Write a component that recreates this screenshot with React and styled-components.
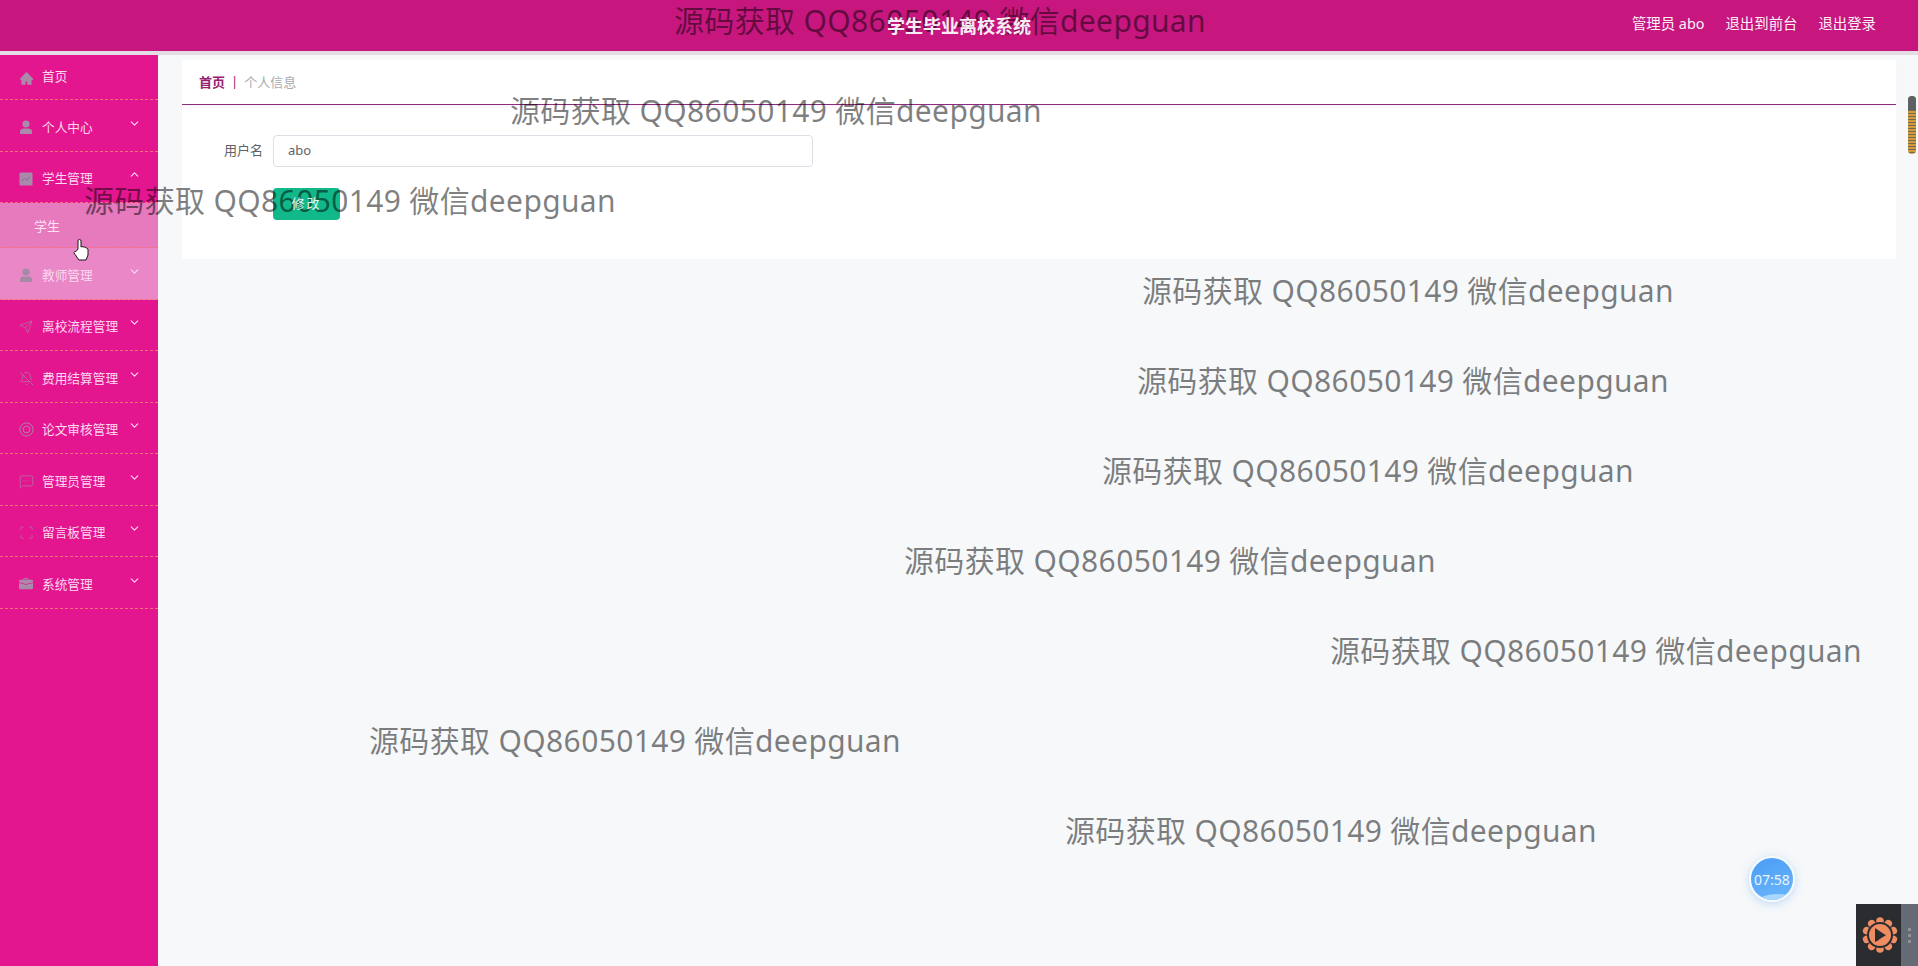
import React from 'react';
import styled, { createGlobalStyle } from 'styled-components';
import { Send, BellOff, MessageSquareMore, Scan, ChevronDown, ChevronUp } from 'lucide-react';
import { AiFillHome } from 'react-icons/ai';
import { BsBriefcaseFill } from 'react-icons/bs';

const FONT = '"Noto Sans", "Noto Sans CJK SC", sans-serif';

const GlobalStyle = createGlobalStyle`
    html, body {
        margin: 0;
        padding: 0;
        height: 100%;
        overflow: hidden;
        background: #f6f8fa;
        font-family: ${FONT};
    }
`;

const Page = styled.div`
    position: relative;
    width: 1918px;
    height: 966px;
    overflow: hidden;
    display: flex;
    flex-direction: column;
`;

const Header = styled.header`
    height: 51px;
    flex: none;
    display: grid;
    grid-template-columns: 1fr auto 1fr;
    align-items: center;
    background: #c7177f;
    border-bottom: 4px solid #e4dde3;
    color: #fff;
`;

const Title = styled.div`
    grid-column: 2;
    font-size: 18px;
    font-weight: 700;
    position: relative;
    z-index: 2;
    top: -1px;
    opacity: .92;
`;

const HeaderLinks = styled.nav`
    justify-self: end;
    display: flex;
    gap: 21px;
    padding-right: 42px;
    font-size: 14.4px;
    position: relative;
    top: -3px;
    opacity: .94;
`;

const Body = styled.div`
    flex: 1;
    display: flex;
    min-height: 0;
`;

const Sidebar = styled.aside`
    width: 158px;
    flex: none;
    background: #e4168f;
`;

const MenuRow = styled.div`
    height: ${p => p.$height || 51.5}px;
    box-sizing: border-box;
    display: flex;
    align-items: center;
    padding-left: 19px;
    border-bottom: 1px dashed #fb6f78;
    color: #fbd9f0;
    font-size: 12.7px;
    background: ${p => p.$hover ? '#e987c7' : 'transparent'};
`;

const IconSlot = styled.span`
    width: 23px;
    flex: none;
    display: flex;
    align-items: center;
    position: relative;
    top: ${p => p.$short ? 1 : 2}px;
    color: ${p => p.$hover ? '#a48aa6' : '#a98aab'};
`;

const MenuLabel = styled.span`
    flex: 1;
    white-space: nowrap;
    position: relative;
    top: ${p => p.$short ? -2 : 1}px;
`;

const Arrow = styled.span`
    width: 30px;
    flex: none;
    display: flex;
    color: #fbd9f0;
    position: relative;
    top: -2px;
`;

const SubRow = styled.div`
    height: 45px;
    box-sizing: border-box;
    display: flex;
    align-items: center;
    padding-left: 34px;
    border-bottom: 1px dashed #fb6f78;
    background: #e779bd;
    color: #fde4f4;
    font-size: 13px;
`;

const Main = styled.main`
    flex: 1;
    min-width: 0;
    padding: 5px 22px 0 24px;
`;

const Panel = styled.section`
    background: #fff;
    height: 199px;
`;

const Crumbs = styled.div`
    height: 45px;
    box-sizing: border-box;
    display: flex;
    align-items: center;
    gap: 6px;
    padding: 0 0 2px 17px;
    border-bottom: 1px solid #8b2c7e;
    box-shadow: 0 4px 6px -2px #fbf1fa;
    font-size: 13px;
`;

const CrumbHome = styled.span`
    color: #96206f;
    font-weight: 700;
`;

const CrumbSep = styled.span`
    color: #a8235f;
`;

const CrumbCurrent = styled.span`
    color: #a6adb4;
`;

const Form = styled.div`
    padding-top: 30px;
    display: grid;
    grid-template-columns: 81px 540px;
    column-gap: 10px;
    row-gap: 21px;
    align-items: center;
`;

const FieldLabel = styled.label`
    font-size: 13px;
    color: #606266;
    text-align: right;
    position: relative;
    top: -2px;
`;

const TextInput = styled.div`
    height: 32px;
    box-sizing: border-box;
    display: flex;
    align-items: center;
    padding: 0 0 2px 14px;
    border: 1px solid #dcdfe6;
    border-radius: 4px;
    font-size: 13px;
    color: #606266;
`;

const SaveButton = styled.button`
    grid-column: 2;
    width: 67px;
    height: 32px;
    padding: 0 0 4px;
    border: 0;
    border-radius: 4px;
    background: #10b88a;
    font: 13px ${FONT};
`;

const SaveLabel = styled.span`
    position: relative;
    z-index: 2;
    color: #fff;
    letter-spacing: 2px;
    opacity: .9;
`;

const Watermark = styled.div`
    position: absolute;
    left: ${p => p.$x}px;
    top: ${p => p.$y}px;
    transform: translateY(-50%);
    font-size: 30px;
    line-height: 44px;
    letter-spacing: .35px;
    color: rgba(0, 0, 0, .5);
    white-space: nowrap;
    pointer-events: none;
`;

const Scrollbar = styled.div`
    position: absolute;
    left: 1908px;
    top: 96px;
    width: 8px;
    height: 58px;
    border-radius: 4px;
    background: repeating-linear-gradient(#d19a3c 0 2px, #7a6a50 2px 3px);
    overflow: hidden;
`;

const ScrollCap = styled.div`
    height: 14px;
    background: #5d6166;
`;

const Timer = styled.div`
    position: absolute;
    left: 1749px;
    top: 856px;
    width: 42px;
    height: 42px;
    display: flex;
    align-items: center;
    justify-content: center;
    border: 2px solid #f4fbff;
    border-radius: 50%;
    overflow: hidden;
    background: linear-gradient(160deg, #4a9df5, #6cb6fb);
    box-shadow: 0 2px 8px rgba(90, 160, 240, .35);
    color: #e8f5ff;
    font-size: 14px;

    &::after {
        content: '';
        position: absolute;
        left: 4px;
        right: -8px;
        bottom: -14px;
        height: 20px;
        border-radius: 50%;
        background: #a9d6fd;
    }
`;

const TimerText = styled.span`
    position: relative;
    z-index: 1;
`;

const Player = styled.div`
    position: absolute;
    right: 0;
    bottom: 0;
    width: 62px;
    height: 62px;
    display: flex;
    background: #2b2c30;
`;

const PlayerIcon = styled.div`
    flex: 1;
    display: flex;
    align-items: center;
    justify-content: center;
    padding-left: 2px;
`;

const PlayerHandle = styled.div`
    width: 17px;
    display: flex;
    flex-direction: column;
    align-items: center;
    justify-content: center;
    gap: 3px;
    background: #666a75;
`;

const HandleDot = styled.i`
    width: 3px;
    height: 3px;
    background: #8f929b;
`;

const Cursor = styled.svg`
    position: absolute;
    left: 73px;
    top: 238px;
`;

const PersonIcon = () => (
    <svg width="14" height="15" viewBox="0 0 14 15" fill="currentColor">
        <circle cx="7" cy="4" r="3.6" />
        <path d="M1 11.5C1 9.5 3 8.6 4.5 8.6h5c1.500 0 3.500.9 3.500 2.900V14H1Z" />
    </svg>
);

// filled square with a little trend line, element-ui style
const ChartIcon = () => (
    <svg width="14" height="14" viewBox="0 0 14 14">
        <rect width="13" height="13" x=".5" y=".5" rx="1" fill="currentColor" />
        <path d="M2.500 9.500 5.500 6.500 7.500 8.500 11 4.500" fill="none" stroke="#8a6a8a" strokeWidth="1" />
    </svg>
);

const TargetIcon = () => (
    <svg width="15" height="15" viewBox="0 0 16 16" fill="none" stroke="currentColor" strokeWidth="1">
        <circle cx="8" cy="8" r="7" />
        <circle cx="8" cy="8" r="3.600" />
    </svg>
);

const SunIcon = () => (
    <svg width="36" height="36" viewBox="0 0 36 36">
        {[0, 36, 72, 108, 144, 180, 216, 252, 288, 324].map(a => (
            <ellipse key={a} cx="18" cy="4" rx="3.800" ry="3.800" fill="#ee8d62" transform={`rotate(${a} 18 18)`} />
        ))}
        <circle cx="18" cy="18" r="13" fill="#2b2c30" />
        <circle cx="18" cy="18" r="11" fill="#ee8d62" />
        <path d="M13 11 25 19 13 25Z" fill="#2b2c30" />
        <path d="M16 23 26 17 26 21Z" fill="#ee8d62" />
    </svg>
);

const menus = [
    { label: '首页', icon: <AiFillHome size={15} />, height: 45, short: true },
    { label: '个人中心', icon: <PersonIcon /> },
    { label: '学生管理', icon: <ChartIcon />, open: true, children: ['学生'] },
    { label: '教师管理', icon: <PersonIcon />, hover: true },
    { label: '离校流程管理', icon: <Send size={14} strokeWidth={1} /> },
    { label: '费用结算管理', icon: <BellOff size={15} strokeWidth={1} /> },
    { label: '论文审核管理', icon: <TargetIcon /> },
    { label: '管理员管理', icon: <MessageSquareMore size={15} strokeWidth={1} /> },
    { label: '留言板管理', icon: <Scan size={15} strokeWidth={1} /> },
    { label: '系统管理', icon: <BsBriefcaseFill size={14} /> },
];

const marks = [
    [674, 21], [510, 111], [84, 201], [1142, 291], [1137, 381],
    [1102, 471], [904, 561], [1330, 651], [369, 741], [1065, 831],
];

const App = () => {
    return (
        <Page>
            <GlobalStyle />
            <Header>
                <Title>学生毕业离校系统</Title>
                <HeaderLinks>
                    <span>管理员 abo</span>
                    <span>退出到前台</span>
                    <span>退出登录</span>
                </HeaderLinks>
            </Header>
            <Body>
                <Sidebar>
                    {menus.map(m => (
                        <React.Fragment key={m.label}>
                            <MenuRow $height={m.height} $hover={m.hover}>
                                <IconSlot $hover={m.hover} $short={m.short}>{m.icon}</IconSlot>
                                <MenuLabel $short={m.short}>{m.label}</MenuLabel>
                                {!m.short && (
                                    <Arrow>
                                        {m.open ? <ChevronUp size={13} /> : <ChevronDown size={13} />}
                                    </Arrow>
                                )}
                            </MenuRow>
                            {m.children && m.children.map(c => <SubRow key={c}>{c}</SubRow>)}
                        </React.Fragment>
                    ))}
                </Sidebar>
                <Main>
                    <Panel>
                        <Crumbs>
                            <CrumbHome>首页</CrumbHome>
                            <CrumbSep>|</CrumbSep>
                            <CrumbCurrent>个人信息</CrumbCurrent>
                        </Crumbs>
                        <Form>
                            <FieldLabel>用户名</FieldLabel>
                            <TextInput>abo</TextInput>
                            <SaveButton><SaveLabel>修改</SaveLabel></SaveButton>
                        </Form>
                    </Panel>
                </Main>
            </Body>
            {marks.map(([x, y]) => (
                <Watermark key={x} $x={x} $y={y}>源码获取 QQ86050149 微信deepguan</Watermark>
            ))}
            <Scrollbar><ScrollCap /></Scrollbar>
            <Timer><TimerText>07:58</TimerText></Timer>
            <Player>
                <PlayerIcon><SunIcon /></PlayerIcon>
                <PlayerHandle><HandleDot /><HandleDot /><HandleDot /></PlayerHandle>
            </Player>
            <Cursor width="18" height="24" viewBox="0 0 18 24">
                <path d="M5 11V3a1.500 1.500 0 0 1 3 0v6l1-.5 1.500.5 1.500 0 1.500 1 1.500 1v6l-2 5H6l-5-7c-.5-1 1-2 2-1.500Z" fill="#fff" stroke="#1a1a1a" strokeWidth="1" />
            </Cursor>
        </Page>
    );
};

export default App;
